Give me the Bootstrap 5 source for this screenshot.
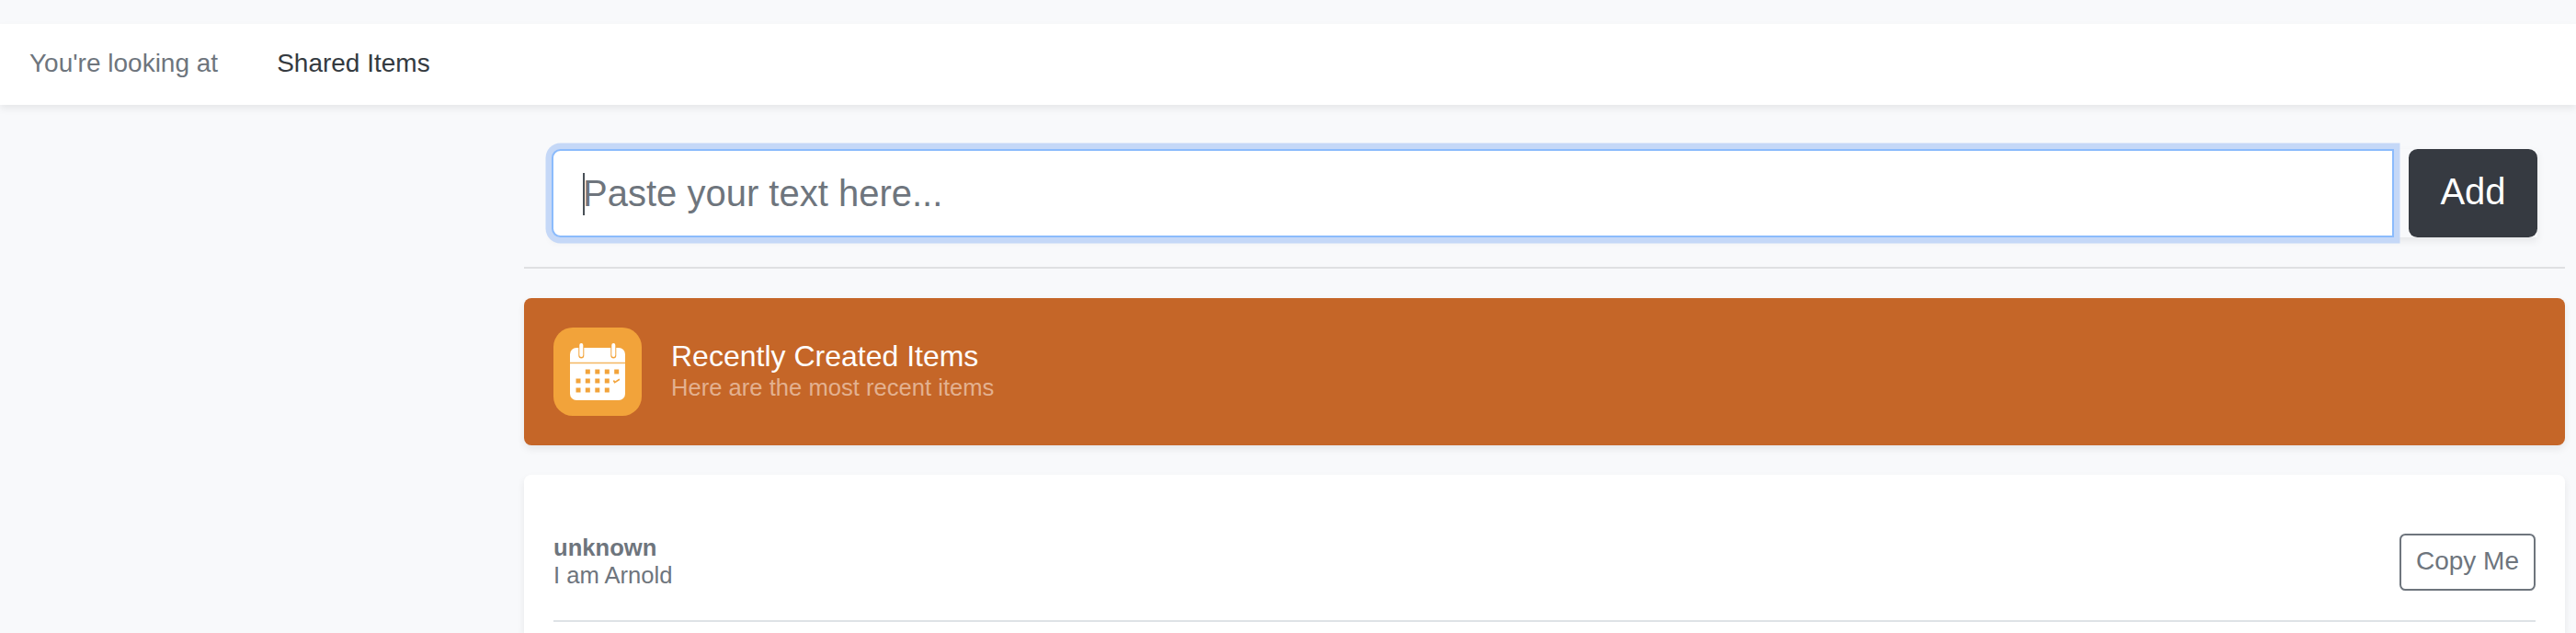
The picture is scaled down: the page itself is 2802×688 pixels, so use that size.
<!DOCTYPE html>
<html lang="en">
<head>
<meta charset="utf-8">
<title>Shared Items</title>
<link href="https://cdn.jsdelivr.net/npm/bootstrap@5.3.0/dist/css/bootstrap.min.css" rel="stylesheet">
<style>
html{font-size:32px;overflow:hidden}
body{font-family:"Liberation Sans",Arial,sans-serif;background:#f8f9fb;padding-top:26px;height:688px;overflow:hidden}
.muted-text{color:#6e757d}
.soft-shadow{box-shadow:0 4px 8px rgba(0,0,0,.075)}
.subnav{height:88px;font-size:28px;line-height:42px;gap:64px;padding:0 32px 2px}
.subnav .current{color:#343a40}
.main-col{width:2220px;margin-left:570px;padding-top:48px}
.entry-row{margin:0 30px;gap:16px}
.entry-row .form-control,.entry-row .form-control:focus{border:2px solid #8bbbfc;border-radius:9.6px 0 0 9.6px;box-shadow:0 0 0 6.5px #c5d8f7;font-size:40px;padding:16px 32px;height:96px;line-height:60px}
.entry-row .form-control::placeholder{color:#6e757d;opacity:1}
.caret{left:34px;top:26px;width:2px;height:46px;background:#495057}
.add-btn{width:140px;height:96px;padding:0 0 4px;font-size:40px;background:#363a41;color:#fff;border-radius:9.6px;border:0}
.divider{height:2px;background:#dfe0e2;margin:32px 0}
.banner{background:#c56628;border-radius:8px;height:160px;padding:2px 32px 0;gap:32px}
.banner svg{margin-top:-2px}
.banner-title{font-size:32px;line-height:32px}
.banner-sub{font-size:25.6px;line-height:38px;color:#e3b190;margin-top:-1px}
.feed{margin-top:32px;padding:64px 32px 0;border-radius:8px 8px 0 0;height:172px}
.feed-item{border-bottom:2px solid #dee2e6;height:96px}
.feed-copy{font-size:25.6px;line-height:30px}
.copy-btn{font-size:28px;line-height:42px;width:148px;height:62px;padding:7px 0 9px;border:2px solid #6e757d;border-radius:6.4px}
</style>
<script src="https://cdn.jsdelivr.net/npm/bootstrap@5.3.0/dist/js/bootstrap.bundle.min.js"></script>
</head>
<body>
<nav class="subnav soft-shadow bg-white d-flex align-items-center">
  <span class="muted-text">You're looking at</span>
  <span class="current">Shared Items</span>
</nav>
<main class="main-col">
  <div class="entry-row soft-shadow d-flex">
    <div class="position-relative flex-grow-1">
      <input class="form-control" type="text" placeholder="Paste your text here...">
      <div class="caret position-absolute"></div>
    </div>
    <button class="btn add-btn" type="button">Add</button>
  </div>
  <div class="divider"></div>
  <div class="banner soft-shadow d-flex align-items-center text-white">
    <svg width="96" height="96" viewBox="0 0 96 96" class="flex-shrink-0">
      <rect width="96" height="96" rx="21" fill="#f2a33a"/>
      <rect x="18" y="22" width="60" height="57" rx="7" fill="#fff"/>
      <path d="M18 38.5h60" stroke="#f4b662" stroke-width="1.4"/>
      <g stroke-linecap="round"><path d="M30.3 19.2v11.3M65.3 19.2v11.3" stroke="#f2a33a" stroke-width="6"/><path d="M30.3 19v11M65.3 19v11" stroke="#fff" stroke-width="4"/></g>
      <path fill="#f2a33a" d="M34.8 45.5h5v5h-5zM45.3 45.5h5v5h-5zM55.8 45.5h5v5h-5zM66.2 45.5h5v5h-5zM24.5 55.6h5v5h-5zM34.8 55.6h5v5h-5zM45.3 55.6h5v5h-5zM55.8 55.6h5v5h-5zM24.5 65.6h5v5h-5zM34.8 65.6h5v5h-5zM45.3 65.6h5v5h-5zM55.8 65.6h5v5h-5z"/>
      <path d="M65.4 57.5l1.3 2.1 5.2-3.3" fill="none" stroke="#f2a33a" stroke-width="1.7"/>
    </svg>
    <div>
      <div class="banner-title">Recently Created Items</div>
      <div class="banner-sub">Here are the most recent items</div>
    </div>
  </div>
  <section class="feed bg-white soft-shadow">
    <div class="feed-item d-flex justify-content-between align-items-start">
      <div class="feed-copy muted-text"><strong class="d-block">unknown</strong>I am Arnold</div>
      <button class="btn copy-btn muted-text" type="button">Copy Me</button>
    </div>
  </section>
</main>
</body>
</html>
